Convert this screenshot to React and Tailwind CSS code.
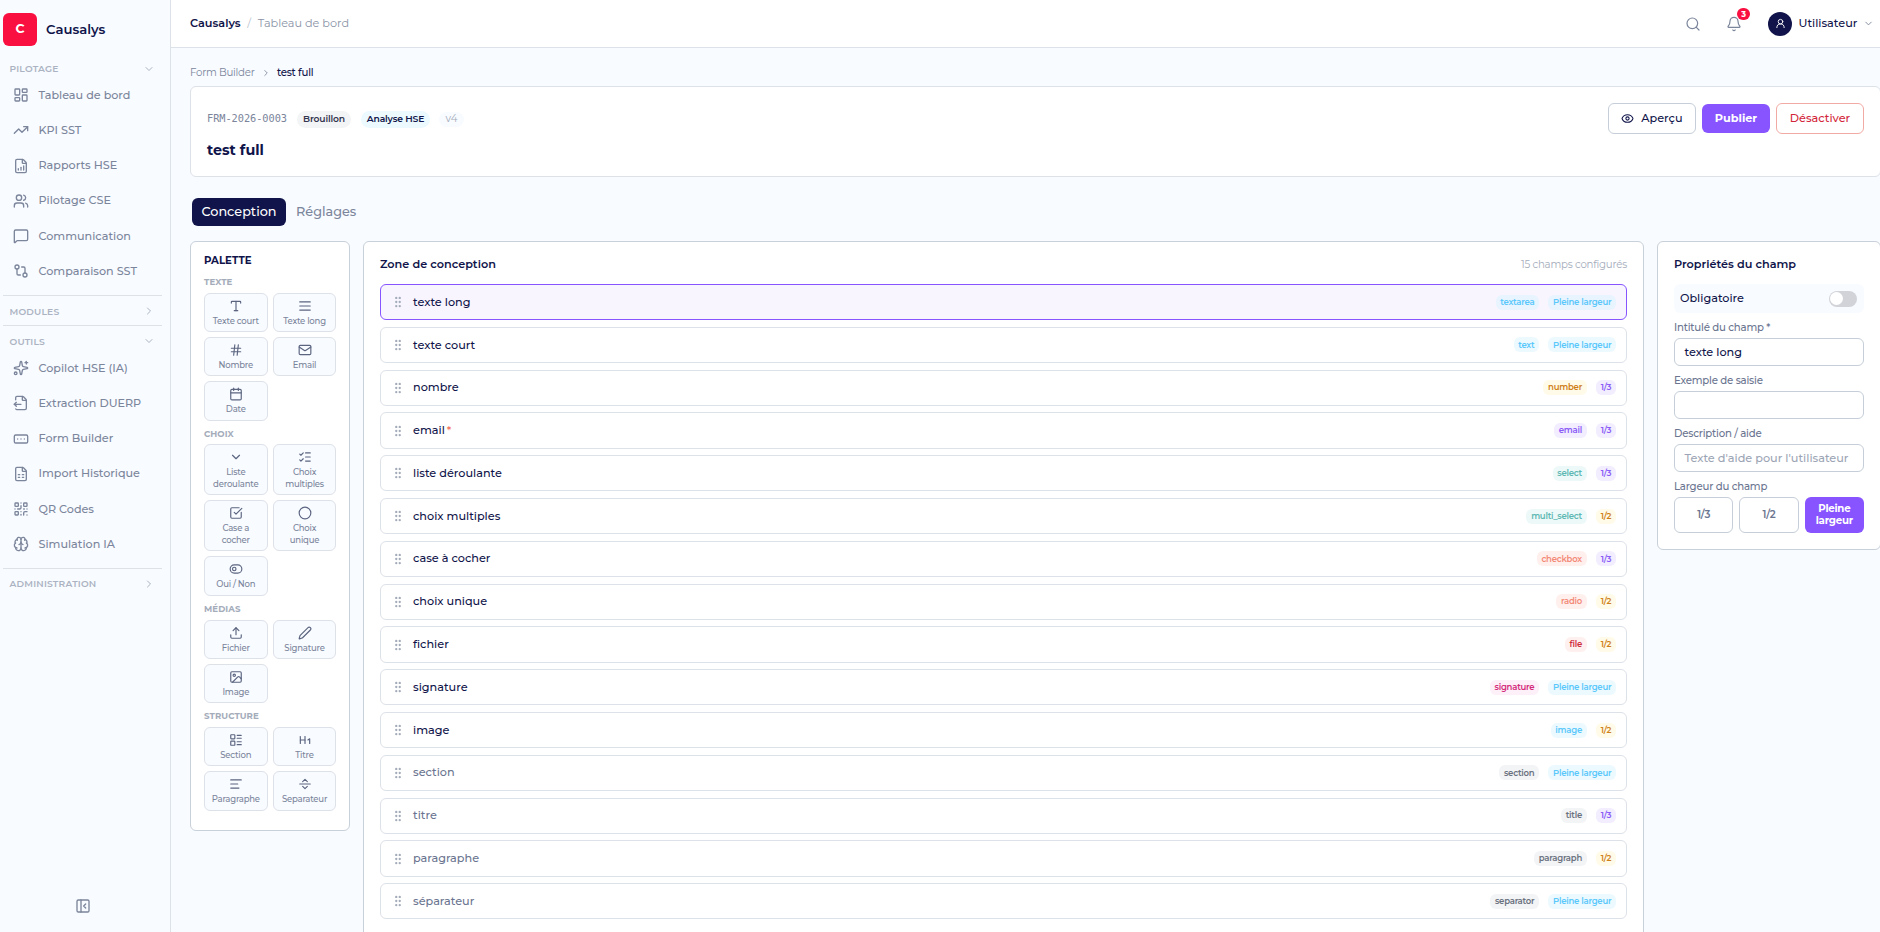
import React from "react";
import {
  LayoutDashboard, TrendingUp, FileChartColumnIncreasing, Users, MessageSquare, GitCompare, Sparkles, FileOutput,
  RectangleEllipsis, FileSpreadsheet, QrCode, Brain, PanelLeftClose, ChevronDown, ChevronRight, Search, Bell,
  UserRound, Eye, Type, AlignJustify, Hash, Mail, Calendar, ListChecks, SquareCheckBig, Circle, ToggleLeft, Upload,
  Image, LayoutList, Heading1, TextAlignStart, SeparatorHorizontal, GripVertical, Pen,
} from "lucide-react";

const pilotage = [
  [LayoutDashboard, "Tableau de bord"],
  [TrendingUp, "KPI SST"],
  [FileChartColumnIncreasing, "Rapports HSE"],
  [Users, "Pilotage CSE"],
  [MessageSquare, "Communication"],
  [GitCompare, "Comparaison SST"],
];
const outils = [
  [Sparkles, "Copilot HSE (IA)"],
  [FileOutput, "Extraction DUERP"],
  [RectangleEllipsis, "Form Builder"],
  [FileSpreadsheet, "Import Historique"],
  [QrCode, "QR Codes"],
  [Brain, "Simulation IA"],
];

const palette = [
  ["TEXTE", [[Type, "Texte court"], [AlignJustify, "Texte long"], [Hash, "Nombre"], [Mail, "Email"], [Calendar, "Date"]]],
  ["CHOIX", [[ChevronDown, "Liste deroulante"], [ListChecks, "Choix multiples"], [SquareCheckBig, "Case a cocher"], [Circle, "Choix unique"], [ToggleLeft, "Oui / Non"]]],
  ["MÉDIAS", [[Upload, "Fichier"], [Pen, "Signature"], [Image, "Image"]]],
  ["STRUCTURE", [[LayoutList, "Section"], [Heading1, "Titre"], [TextAlignStart, "Paragraphe"], [SeparatorHorizontal, "Separateur"]]],
];

const sky = "bg-[#ecfaff] text-[#5bc8fb]";
const amber = "bg-[#fffbe8] text-[#d08018]";
const violet = "bg-[#f2edff] text-[#8b5cf6]";
const teal = "bg-[#edf9f8] text-[#5fb8b4]";
const coral = "bg-[#fff0ee] text-[#f38b78]";
const gray = "bg-[#f3f4f6] text-[#6b7280]";
const FULL = ["Pleine largeur", sky];
const HALF = ["1/2", amber];
const THIRD = ["1/3", violet];

const fields = [
  ["texte long", "textarea", "bg-[#e8f4ff] text-[#5bc8fb]", ["Pleine largeur", "bg-[#e8f4ff] text-[#5bc8fb]"]],
  ["texte court", "text", sky, FULL],
  ["nombre", "number", amber, THIRD],
  ["email", "email", violet, THIRD],
  ["liste déroulante", "select", teal, THIRD],
  ["choix multiples", "multi_select", teal, HALF],
  ["case à cocher", "checkbox", coral, THIRD],
  ["choix unique", "radio", coral, HALF],
  ["fichier", "file", "bg-[#fff0f0] text-[#cf2f3d]", HALF],
  ["signature", "signature", "bg-[#fdf0f8] text-[#d42a7b]", FULL],
  ["image", "image", sky, HALF],
  ["section", "section", gray, FULL],
  ["titre", "title", gray, THIRD],
  ["paragraphe", "paragraph", gray, HALF],
  ["séparateur", "separator", gray, FULL],
];

function SectionHead({ label, open }) {
  const Chevron = open ? ChevronDown : ChevronRight;
  return (
    <div className="flex h-[17px] items-center justify-between pl-[6.5px] pr-[7px] text-[9.15px] font-semibold tracking-[0.2px] text-[#abb3c2]">
      <span>{label}</span>
      <Chevron size={12} />
    </div>
  );
}

function NavItem({ icon: Icon, label }) {
  return (
    <div className="flex h-[35.2px] items-center gap-[9.5px] pl-[10px] text-[11.2px] font-medium text-[#7b859b]">
      <Icon size={16} className="shrink-0" />
      <span className="whitespace-nowrap">{label}</span>
    </div>
  );
}

function Sidebar() {
  return (
    <aside className="flex h-full w-[171px] shrink-0 flex-col border-r border-[#dde1e8] bg-[#f8fbff] pl-[3px] pr-[8px]">
      <div className="mt-[13px] flex h-[33px] items-center gap-[9px]">
        <div className="flex h-[33px] w-[34px] items-center justify-center rounded-[6px] bg-[#f90f40] text-[12.5px] font-bold text-white">C</div>
        <span className="text-[13.2px] font-semibold text-[#10144a]">Causalys</span>
      </div>
      <div className="mt-[14px]"><SectionHead label="PILOTAGE" open /></div>
      <nav className="mt-[0.7px]">{pilotage.map(([i, l]) => <NavItem key={l} icon={i} label={l} />)}</nav>
      <div className="mt-[6.1px] flex h-[31px] items-center border-y border-[#dde1e8] pt-[2px]"><div className="w-full"><SectionHead label="MODULES" /></div></div>
      <div className="mt-[7px]"><SectionHead label="OUTILS" open /></div>
      <nav className="mt-[0.7px]">{outils.map(([i, l]) => <NavItem key={l} icon={i} label={l} />)}</nav>
      <div className="mt-[6.1px] border-t border-[#dde1e8] pt-[7px]"><SectionHead label="ADMINISTRATION" /></div>
      <div className="mt-auto flex justify-center pb-[18px] text-[#7b859b]"><PanelLeftClose size={16} /></div>
    </aside>
  );
}

function Header() {
  return (
    <header className="flex h-[48px] shrink-0 items-center justify-between border-b border-[#dde1e8] bg-white pl-[19px] pr-[6px]">
      <div className="flex items-center text-[11.26px]">
        <span className="font-semibold text-[#10144a]">Causalys</span>
        <span className="mx-[6.7px] text-[#b8bfcc]">/</span>
        <span className="text-[#8a93a6]">Tableau de bord</span>
      </div>
      <div className="flex items-center text-[#7b859b]">
        <Search size={16} strokeWidth={1.8} />
        <div className="relative ml-[25px]">
          <Bell size={16} strokeWidth={1.8} />
          <span className="absolute -top-[8px] left-[11px] flex h-[12px] w-[13px] items-center justify-center rounded-full bg-[#f90f40] text-[8px] font-bold text-white">3</span>
        </div>
        <div className="ml-[26px] flex h-6 w-6 items-center justify-center rounded-full bg-[#10144a] text-white"><UserRound size={11} /></div>
        <span className="ml-[6.5px] w-[60px] text-[11.26px] font-medium text-[#10144a]">Utilisateur</span>
        <ChevronDown size={11} className="ml-[4.5px]" />
      </div>
    </header>
  );
}

function FormCard() {
  return (
    <section className="mt-[5px] flex h-[91px] items-start justify-between rounded-[6px] border border-[#dde1e8] bg-white pl-4 pr-[16px] pt-[16px]">
      <div>
        <div className="flex h-[32px] items-center">
          <span className="w-[80px] whitespace-nowrap font-['DejaVu_Sans_Mono',monospace] text-[10.3px] tracking-[-0.05px] text-[#7b859b]">FRM-2026-0003</span>
          <span className="ml-[10px] flex h-[17px] w-[54px] items-center justify-center rounded-full bg-[#f3f4f6] text-[9.2px] font-semibold tracking-[-0.15px] text-[#33364f]">Brouillon</span>
          <span className="ml-[10px] flex h-[17px] w-[69px] items-center justify-center whitespace-nowrap rounded-full bg-[#ecfaff] text-[9.2px] font-semibold tracking-[-0.15px] text-[#10144a]">Analyse HSE</span>
          <span className="ml-[9px] flex h-[15px] w-[25px] items-center justify-center rounded-full bg-[#f8fbff] text-[10.2px] text-[#a4acba]">v4</span>
        </div>
        <h1 className="mt-[4px] text-[14.3px] font-bold leading-[22px] text-[#10144a]">test full</h1>
      </div>
      <div className="flex items-center gap-[6px] text-[11.26px] font-medium">
        <button className="flex h-[31px] w-[88px] items-center justify-center gap-[7px] rounded-[6px] border border-[#c5ced9] text-[#10144a]"><Eye size={13} />Aperçu</button>
        <button className="h-[29px] w-[68px] rounded-[6px] bg-[#8754ff] font-bold text-white">Publier</button>
        <button className="h-[31px] w-[88px] rounded-[6px] border border-[#f2aaa4] text-[#d3263a]">Désactiver</button>
      </div>
    </section>
  );
}

function Palette() {
  return (
    <aside className="h-[590px] w-[160px] shrink-0 rounded-[6px] border border-[#c8d0da] bg-white px-[13px] pt-[11px]">
      <h2 className="text-[10.2px] font-bold leading-[15px] tracking-[0.05px] text-[#10144a]">PALETTE</h2>
      {palette.map(([label, items], g) => (
        <div key={label} className={g === 0 ? "mt-[8px]" : "mt-[7px]"}>
          <div className="h-[16.8px] text-[8.6px] font-bold leading-[12px] tracking-[0.1px] text-[#a4acba]">{label}</div>
          <div className="grid grid-cols-[63.6px_62.9px] gap-x-[5.5px] gap-y-[5px]">
            {items.map(([Icon, text]) => (
              <div key={text} className="flex min-h-[39.3px] flex-col items-center gap-[2px] rounded-[6px] border border-[#dde1e8] bg-[#f8fbff] px-[7px] pb-[4px] pt-[5px] text-center text-[8.5px] font-medium leading-[12px] tracking-[-0.2px] text-[#7b859b]">
                <Icon size={14} className="shrink-0 text-[#5b6580]" />
                <span>{text}</span>
              </div>
            ))}
          </div>
        </div>
      ))}
    </aside>
  );
}

function Badge({ text, color }) {
  return <span className={"flex h-[15px] items-center rounded-[6px] px-[4.7px] text-[8.5px] font-semibold tracking-[-0.23px] " + color}>{text}</span>;
}

function DesignZone() {
  return (
    <section className="h-[720px] w-[1281px] shrink-0 rounded-[6px] border border-[#c8d0da] bg-white px-4 pt-[13px]">
      <div className="flex h-[18px] items-center justify-between">
        <h2 className="text-[11.26px] font-semibold leading-[18px] text-[#10144a]">Zone de conception</h2>
        <span className="pt-px text-[10.2px] leading-[18px] tracking-[-0.2px] text-[#a4acba]">15 champs configurés</span>
      </div>
      <div className="mt-[11px] flex flex-col gap-[6.5px]">
        {fields.map(([name, type, color, [wText, wColor]], i) => (
          <div key={name} className={"flex h-[36.3px] items-center rounded-[6px] border pl-[9.5px] pr-[10px] " + (i === 0 ? "border-[#8754ff] bg-[#f9f5ff]" : "border-[#dde1e8] bg-white")}>
            <GripVertical size={14} className="text-[#a4acba]" />
            <span className={"ml-[8.5px] text-[11.26px] font-medium " + (i > 10 ? "text-[#6b7590]" : "text-[#10144a]")}>
              {name}{name === "email" && <span className="ml-[2px] text-[#f36b55]">*</span>}
            </span>
            <div className="ml-auto flex gap-[9.3px]">
              <Badge text={type} color={color} />
              <Badge text={wText} color={wColor} />
            </div>
          </div>
        ))}
      </div>
    </section>
  );
}

const inputBox = "flex h-[28px] items-center rounded-[6px] border border-[#c5ced9] bg-white px-[9.5px] text-[11.26px] font-medium";
const fieldLabel = "block h-[18px] text-[10.2px] font-medium leading-[16.6px] tracking-[-0.2px] text-[#6b7590]";

function Properties() {
  return (
    <aside className="h-[309px] w-[224px] shrink-0 rounded-[6px] border border-[#c8d0da] bg-white px-4 pt-[13px]">
      <h2 className="text-[11.26px] font-semibold leading-[18px] text-[#10144a]">Propriétés du champ</h2>
      <div className="mt-[11px] flex h-[29px] items-center justify-between rounded-[6px] bg-[#f8fbff] pl-[6px] pr-[7px] text-[11.26px] font-medium text-[#10144a]">
        <span>Obligatoire</span>
        <span className="flex h-4 w-7 items-center rounded-full bg-[#d1d3d8] px-px"><span className="h-[13px] w-[13px] rounded-full bg-white" /></span>
      </div>
      <div className="mt-[7px]"><span className={fieldLabel}>Intitulé du champ *</span><div className={inputBox + " text-[#10144a]"}>texte long</div></div>
      <div className="mt-[7.2px]"><span className={fieldLabel}>Exemple de saisie</span><div className={inputBox} /></div>
      <div className="mt-[7.2px]"><span className={fieldLabel}>Description / aide</span><div className={inputBox + " whitespace-nowrap text-[#9ca5b5]"}>Texte d'aide pour l'utilisateur</div></div>
      <div className="mt-[7px]">
        <span className={fieldLabel}>Largeur du champ</span>
        <div className="grid h-[36px] grid-cols-3 gap-[6px] text-[10.2px] font-semibold leading-[12px] tracking-[-0.2px]">
          <button className="rounded-[6px] border border-[#c5ced9] text-[#6b7590]">1/3</button>
          <button className="rounded-[6px] border border-[#c5ced9] text-[#6b7590]">1/2</button>
          <button className="rounded-[6px] bg-[#8754ff] font-bold text-white">Pleine largeur</button>
        </div>
      </div>
    </aside>
  );
}

export default function App() {
  return (
    <div className="flex h-[932px] w-[1880px] overflow-hidden bg-[#f8fbff] font-['Montserrat','Inter',sans-serif]">
      <Sidebar />
      <div className="flex min-w-0 flex-1 flex-col">
        <Header />
        <main className="min-h-0 w-[1710px] flex-1 overflow-hidden pl-[19px]">
          <div className="mt-[17px] flex h-[16px] items-center text-[10.2px] tracking-[-0.23px]">
            <span className="text-[#7b859b]">Form Builder</span>
            <ChevronRight size={10} className="mx-[6.2px] text-[#7b859b]" />
            <span className="font-medium text-[#10144a]">test full</span>
          </div>
          <FormCard />
          <div className="ml-[2px] mt-[21px] flex h-[28px] items-center gap-[10px] text-[12.8px] font-medium">
            <span className="flex h-[28px] w-[94px] items-center justify-center rounded-[6px] bg-[#10144a] text-white">Conception</span>
            <span className="text-[#7b859b]">Réglages</span>
          </div>
          <div className="mt-[15px] flex items-start gap-[13px]">
            <Palette />
            <DesignZone />
            <Properties />
          </div>
        </main>
      </div>
    </div>
  );
}
